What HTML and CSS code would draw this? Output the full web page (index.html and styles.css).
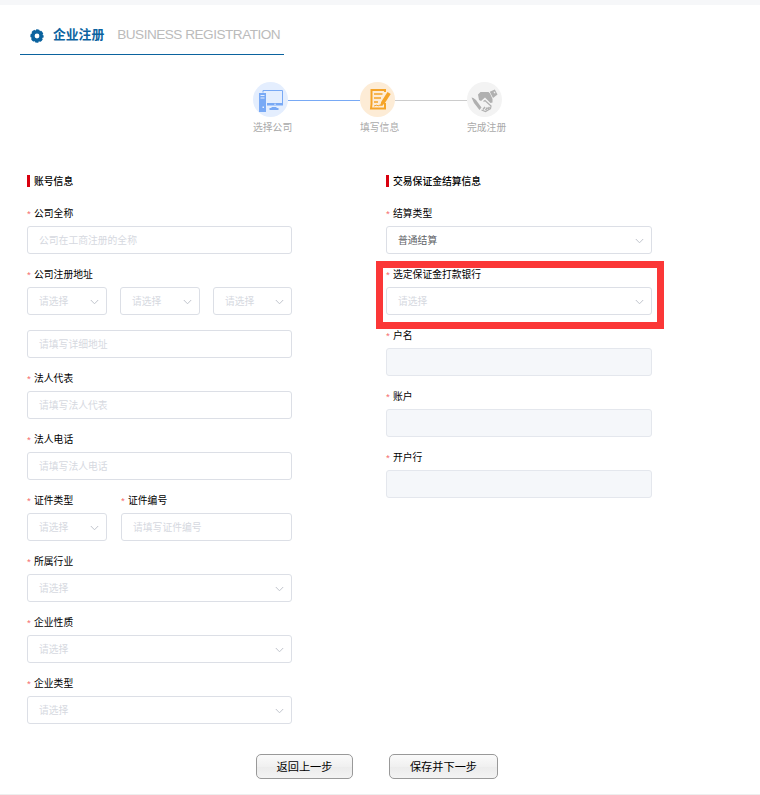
FILE: index.html
```html
<!DOCTYPE html>
<html lang="zh-CN">
<head>
<meta charset="utf-8">
<title>企业注册</title>
<link rel="stylesheet" href="styles.css">
</head>
<body>
<svg width="0" height="0" class="defs"><symbol id="chev" viewBox="0 0 9 6"><path d="M.8 1l3.700 3.800L8.200 1" fill="none" stroke="#c0c4cc" stroke-width="1"/></symbol></svg>
<div class="page">
  <header class="title">
    <svg class="gear" viewBox="0 0 14 14"><circle cx="7" cy="7" r="4.200" fill="none" stroke="#0b639f" stroke-width="3.600"/><circle cx="7" cy="7" r="5.700" fill="none" stroke="#0b639f" stroke-width="1.900" stroke-dasharray="3.300 1.177" stroke-dashoffset="1.650"/></svg>
    <h1>企业注册</h1>
    <span class="en">BUSINESS REGISTRATION</span>
  </header>

  <div class="steps">
    <div class="step">
      <svg viewBox="0 0 35 35"><circle cx="17.500" cy="17.500" r="17.500" fill="#e4eefe"/><path fill="#78a9f5" d="M6 11h7v19H6z"/><path fill="#e4eefe" d="M7.500 13h4v1h-4zm0 2.500h4v1h-4zm2 9h1.500V26H9.500z"/><path fill="none" stroke="#78a9f5" d="M10 10.500v-2h19.500v13"/><path fill="#78a9f5" d="M14 21h16v2.500H14zM18.500 25h5v1h2v2h-9v-2h2z"/><path fill="#e4eefe" d="M21.300 21.700h1.500v1h-1.500z"/></svg>
      <span>选择公司</span>
    </div>
    <i class="line done"></i>
    <div class="step">
      <svg viewBox="0 0 35 35"><circle cx="17.500" cy="17.500" r="17.500" fill="#fdecd6"/><path fill="none" stroke="#f5a428" stroke-width="2" d="M25 10V8H11.500v14l-.5 4.500h14V21"/><path stroke="#f5a428" stroke-width="1.700" d="M14 12h8.500m-8.500 4h7m-7 4h4"/><path fill="none" stroke="#f5a428" d="M14 24l3-1 1 1 2-1h3"/><path fill="#f5a428" d="M27.500 10l3.200 2-6.400 10-4 2.200.8-4.200z"/></svg>
      <span>填写信息</span>
    </div>
    <i class="line"></i>
    <div class="step">
      <svg viewBox="0 0 35 35"><circle cx="17.500" cy="17.500" r="17.500" fill="#f3f3f3"/><path fill="#b0b0b0" d="M22.800 9.800l5-2.300 2.700 5-4.500 3.500z"/><path fill="#f3f3f3" d="M26.500 10l1-.5 1 1.500-1 .5z"/><path fill="#b0b0b0" d="M11 12.500l2.500-2.500h8l1.500 1.500 2.500 5.500v3.500l-2 .5-5.500-5.500-4 3.500-2-1zM4.500 15.500l1.800.5 2.700 2 5.500 7.500-2 2.500L7 21z"/><path fill="none" stroke="#b0b0b0" stroke-width="1.200" d="M16.500 19.500l1.500-1 6 5.500-.5 2.500-5 3-4-1.500"/><path fill="none" stroke="#b0b0b0" stroke-width="1.400" d="M16 27.500l2-2.500m.5 3l2-2.500m.5 1.500l1.500-2"/></svg>
      <span>完成注册</span>
    </div>
  </div>

  <main class="columns">
    <section class="left">
      <h2>账号信息</h2>
      <div class="field"><label>公司全称</label><div class="input">公司在工商注册的全称</div></div>
      <div class="field"><label>公司注册地址</label>
        <div class="region">
          <div class="input">请选择<svg><use href="#chev"/></svg></div>
          <div class="input">请选择<svg><use href="#chev"/></svg></div>
          <div class="input">请选择<svg><use href="#chev"/></svg></div>
        </div>
        <div class="input detail">请填写详细地址</div>
      </div>
      <div class="field"><label>法人代表</label><div class="input">请填写法人代表</div></div>
      <div class="field"><label>法人电话</label><div class="input">请填写法人电话</div></div>
      <div class="cert">
        <div class="field"><label>证件类型</label><div class="input">请选择<svg><use href="#chev"/></svg></div></div>
        <div class="field"><label>证件编号</label><div class="input">请填写证件编号</div></div>
      </div>
      <div class="field"><label>所属行业</label><div class="input">请选择<svg><use href="#chev"/></svg></div></div>
      <div class="field"><label>企业性质</label><div class="input">请选择<svg><use href="#chev"/></svg></div></div>
      <div class="field"><label>企业类型</label><div class="input">请选择<svg><use href="#chev"/></svg></div></div>
    </section>
    <section class="right">
      <h2>交易保证金结算信息</h2>
      <div class="field"><label>结算类型</label><div class="input chosen">普通结算<svg><use href="#chev"/></svg></div></div>
      <div class="field marked"><label>选定保证金打款银行</label><div class="input">请选择<svg><use href="#chev"/></svg></div></div>
      <div class="field"><label>户名</label><div class="input disabled"></div></div>
      <div class="field"><label>账户</label><div class="input disabled"></div></div>
      <div class="field"><label>开户行</label><div class="input disabled"></div></div>
    </section>
  </main>

  <div class="actions"><button class="back">返回上一步</button><button class="next">保存并下一步</button></div>
</div>
</body>
</html>
```
FILE: styles.css
```css
*, *::before, *::after { box-sizing: border-box; }
body { margin: 0; background: #fff; font-family: "Liberation Sans", "Noto Sans CJK SC", sans-serif; font-size: 9.8px; color: #000; }
.defs { display: block; }
.page { height: 795px; border-top: 5px solid #f6f7f9; border-bottom: 1px solid #eee; overflow: hidden; }
.title { width: 264px; height: 50px; margin-left: 20px; padding: 0 0 0 9px; border-bottom: 1px solid #0b639f; display: flex; align-items: center; white-space: nowrap; }
.gear { flex: none; width: 14px; height: 14px; margin: 12px 0 0 1px; }
.title h1 { margin: 10px 0 0 9px; font-size: 12.8px; line-height: 20px; color: #0b639f; font-weight: 700; }
.en { margin: 10px 0 0 13px; font-size: 13.6px; line-height: 20px; letter-spacing: -.5px; color: #bbb; }
.steps { display: flex; margin: 27px 0 0 253px; height: 54px; }
.step { width: 35px; white-space: nowrap; color: #aaa; }
.step svg { display: block; width: 35px; height: 35px; }
.step span { display: block; padding-top: 2px; line-height: 18px; }
.line { width: 72px; height: 1px; margin-top: 18px; background: #ccc; }
.line.done { background: #78a9f5; }
.columns { display: flex; gap: 94px; margin: 35px 0 0 27px; height: 567px; }
.left { width: 265px; }
.right { width: 266px; }
h2 { margin: 4px 0 13px; height: 12px; line-height: 12px; padding: 1px 0 0 4px; border-left: 3px solid #d9000f; font-size: 9.8px; font-weight: 500; white-space: nowrap; }
.field { margin-bottom: 7px; position: relative; }
label { display: block; height: 26px; padding-top: 1px; line-height: 26px; white-space: nowrap; }
label::before { content: "*"; display: inline-block; width: 7px; color: #f56c6c; }
.input { display: flex; align-items: center; justify-content: space-between; height: 28px; padding: 0 7px 0 11px; border: 1px solid #dcdfe6; border-radius: 3px; color: #d6d9df; white-space: nowrap; }
.input svg { width: 9px; height: 6px; margin-top: 2px; }
.region { display: grid; grid-template-columns: 80px 80px 79px; gap: 13px; }
.detail { margin-top: 15px; }
.cert { display: grid; grid-template-columns: 80px 171px; gap: 14px; }
.chosen { color: #606266; }
.disabled { background: #f5f7fa; border-color: #e4e7ed; }
.marked::after { content: ""; position: absolute; left: -10px; top: 0; width: 288px; height: 68px; border: 7px solid #fb3737; }
.actions { display: flex; gap: 36px; margin: 16px 0 0 256px; }
button { height: 25px; padding: 1px 0 0; border: 1px solid #999; border-radius: 5px; background: linear-gradient(#fafafa, #f0f0f0 50%, #ebebeb 51%, #f3f3f3); font: 11.2px/22px "Liberation Sans", "Noto Sans CJK SC", sans-serif; color: #000; }
.back { width: 97px; }
.next { width: 109px; }
```
